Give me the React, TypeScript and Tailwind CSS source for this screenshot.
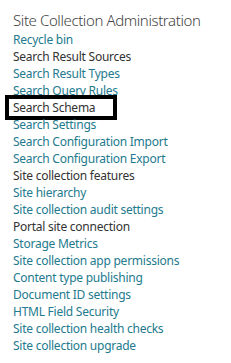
import React from "react";

const items: { t: string; link: boolean; boxed?: boolean }[] = [
  { t: "Recycle bin", link: true },
  { t: "Search Result Sources", link: false },
  { t: "Search Result Types", link: true },
  { t: "Search Query Rules", link: true },
  { t: "Search Schema", link: false, boxed: true },
  { t: "Search Settings", link: true },
  { t: "Search Configuration Import", link: true },
  { t: "Search Configuration Export", link: true },
  { t: "Site collection features", link: false },
  { t: "Site hierarchy", link: true },
  { t: "Site collection audit settings", link: true },
  { t: "Portal site connection", link: false },
  { t: "Storage Metrics", link: true },
  { t: "Site collection app permissions", link: true },
  { t: "Content type publishing", link: true },
  { t: "Document ID settings", link: true },
  { t: "HTML Field Security", link: true },
  { t: "Site collection health checks", link: true },
  { t: "Site collection upgrade", link: true },
];

export default function App() {
  return (
    <div
      className="w-[231px] h-[363px] bg-white overflow-hidden pl-[13px] pt-[9px]"
      style={{ fontFamily: '"Noto Sans", "Open Sans", sans-serif' }}
    >
      <div className="text-[15px] leading-[22px] tracking-[-0.4px] text-[#444] font-light">
        Site Collection Administration
      </div>
      <ul className="flex flex-col">
        {items.map((it) => (
          <li
            key={it.t}
            className={`relative text-[12px] leading-[17px] tracking-[-0.25px] ${it.link ? "text-[#237a8e]" : "text-[#333]"}`}
          >
            {it.boxed && (
              <span className="absolute left-[-8px] top-[-4px] w-[112px] h-[25px] border-[4px] border-black" />
            )}
            {it.t}
          </li>
        ))}
      </ul>
    </div>
  );
}
